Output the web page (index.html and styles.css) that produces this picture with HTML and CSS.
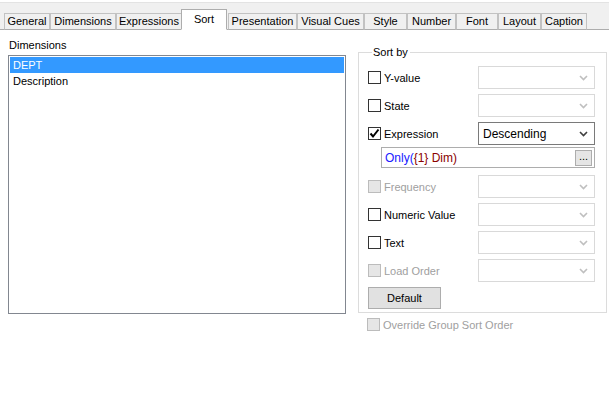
FILE: index.html
```html
<!DOCTYPE html>
<html lang="en">
<head>
  <meta charset="UTF-8" />
  <title>Sort</title>
  <link rel="stylesheet" href="styles.css">
</head>
<body>

  <!-- tab strip -->
  <div class="tabs">
    <div class="tab">General</div>
    <div class="tab">Dimensions</div>
    <div class="tab">Expressions</div>
    <div class="tab active">Sort</div>
    <div class="tab">Presentation</div>
    <div class="tab">Visual Cues</div>
    <div class="tab">Style</div>
    <div class="tab">Number</div>
    <div class="tab">Font</div>
    <div class="tab">Layout</div>
    <div class="tab">Caption</div>
  </div>

  <div class="page">
    <div class="left">
      <div class="label">Dimensions</div>
      <div class="listbox">
        <div class="item selected">DEPT</div>
        <div class="item">Description</div>
      </div>
    </div>

    <div class="right">
      <fieldset class="group">
        <legend>Sort by</legend>

        <div class="row">
          <label class="check"><span class="box"></span>Y-value</label>
          <div class="combo disabled"><span></span><svg width="9" height="6" viewBox="0 0 9 6"><polyline points="1,1 4.5,4.5 8,1" /></svg></div>
        </div>
        <div class="row">
          <label class="check"><span class="box"></span>State</label>
          <div class="combo disabled"><span></span><svg width="9" height="6" viewBox="0 0 9 6"><polyline points="1,1 4.5,4.5 8,1" /></svg></div>
        </div>
        <div class="row short">
          <label class="check"><span class="box checked"><svg width="11" height="11" viewBox="0 0 11 11"><polyline points="1.5,5.5 4,8.5 9.5,1.5" /></svg></span>Expression</label>
          <div class="combo"><span>Descending</span><svg width="9" height="6" viewBox="0 0 9 6"><polyline points="1,1 4.5,4.5 8,1" /></svg></div>
        </div>
        <div class="expr">
          <span class="fn">Only(</span><span class="dim">{1} Dim)</span>
          <div class="dots">...</div>
        </div>
        <div class="row">
          <label class="check off"><span class="box"></span>Frequency</label>
          <div class="combo disabled"><span></span><svg width="9" height="6" viewBox="0 0 9 6"><polyline points="1,1 4.5,4.5 8,1" /></svg></div>
        </div>
        <div class="row">
          <label class="check"><span class="box"></span>Numeric Value</label>
          <div class="combo disabled"><span></span><svg width="9" height="6" viewBox="0 0 9 6"><polyline points="1,1 4.5,4.5 8,1" /></svg></div>
        </div>
        <div class="row">
          <label class="check"><span class="box"></span>Text</label>
          <div class="combo disabled"><span></span><svg width="9" height="6" viewBox="0 0 9 6"><polyline points="1,1 4.5,4.5 8,1" /></svg></div>
        </div>
        <div class="row">
          <label class="check off"><span class="box"></span>Load Order</label>
          <div class="combo disabled"><span></span><svg width="9" height="6" viewBox="0 0 9 6"><polyline points="1,1 4.5,4.5 8,1" /></svg></div>
        </div>

        <button class="btn">Default</button>
      </fieldset>

      <label class="check off override"><span class="box"></span>Override Group Sort Order</label>
    </div>
  </div>

</body>
</html>
```

FILE: styles.css
```css
* {
  margin: 0;
  padding: 0;
  box-sizing: border-box;
}

html, body {
  height: 100%;
  overflow: hidden;
}

body {
  background: #fff;
  color: #000;
  font-family: "Liberation Sans", Arial, sans-serif;
  font-size: 11px;
}

/* tab strip */
.tabs {
  display: flex;
  align-items: flex-end;
  height: 30px;
  padding-left: 4px;
  background: #f0f0f0;
  border-top: 2px solid #fff;
  border-bottom: 1px solid #adadad;
  box-shadow: inset 0 1px 0 #e3e3e3;
}

.tab {
  height: 17px;
  line-height: 15px;
  margin-bottom: -1px;
  text-align: center;
  background: #f0f0f0;
  border: 1px solid #c2c2c2;
  border-bottom-color: #adadad;
  white-space: nowrap;
}

.tab:nth-child(1) { width: 46px; }
.tab:nth-child(2) { width: 66px; }
.tab:nth-child(3) { width: 66px; }
.tab:nth-child(4) { width: 46px; }
.tab:nth-child(5) { width: 69px; margin-left: 1px; }
.tab:nth-child(6) { width: 67px; }
.tab:nth-child(7) { width: 43px; }
.tab:nth-child(8) { width: 49px; }
.tab:nth-child(9) { width: 42px; }
.tab:nth-child(10) { width: 43px; }
.tab:nth-child(11) { width: 46px; }

.tab.active {
  height: 21px;
  line-height: 18px;
  margin-left: -1px;
  background: #fff;
  border-color: #adadad;
  border-bottom-color: #fff;
}

/* content */
.page {
  display: flex;
  padding: 9px 0 0 8px;
}

.left {
  width: 338px;
}

.label {
  height: 16px;
  padding-left: 1px;
  line-height: 13px;
}

.listbox {
  height: 259px;
  padding: 1px;
  border: 1px solid #828790;
}

.item {
  height: 16px;
  line-height: 16px;
  padding-left: 3px;
}

.item.selected {
  background: #3399ff;
  color: #fff;
}

.right {
  margin-left: 12px;
  margin-top: 6px;
}

.group {
  width: 249px;
  height: 268px;
  padding: 7px 11px 0 9px;
  border: 1px solid #dcdcdc;
}

.group legend {
  margin-left: 4px;
  padding: 0 2px 0 1px;
  line-height: 14px;
}

.row {
  display: flex;
  align-items: center;
  justify-content: space-between;
  height: 23px;
  margin-bottom: 5px;
}

.row.short {
  margin-bottom: 2px;
}

.check {
  display: flex;
  align-items: center;
  gap: 3px;
}

.check.off {
  color: #a0a0a0;
}

.box {
  display: flex;
  align-items: center;
  justify-content: center;
  width: 13px;
  height: 13px;
  border: 1px solid #333;
  background: #fff;
}

.check.off .box {
  border-color: #bcbcbc;
  background: #e6e6e6;
}

.box svg polyline {
  fill: none;
  stroke: #000;
  stroke-width: 2;
}

.combo {
  display: flex;
  align-items: center;
  justify-content: space-between;
  width: 117px;
  height: 23px;
  padding: 0 6px 0 4px;
  border: 1px solid #7a7a7a;
  background: #fff;
}

.combo span {
  font-size: 12px;
}

.combo.disabled {
  border-color: #d9d9d9;
}

.combo svg polyline {
  fill: none;
  stroke: #404040;
  stroke-width: 1.6;
}

.combo.disabled svg polyline {
  stroke: #bfbfbf;
}

.expr {
  position: relative;
  display: flex;
  align-items: center;
  height: 21px;
  margin: 0 0 7px 13px;
  padding-left: 3px;
  font-size: 12px;
  border: 1px solid #adadad;
}

.fn {
  color: #2020ff;
}

.dim {
  color: #8b0000;
}

.dots {
  position: absolute;
  right: 2px;
  top: 2px;
  width: 17px;
  height: 16px;
  line-height: 10px;
  text-align: center;
  font-size: 11px;
  background: #e5e5e5;
  border: 1px solid #adadad;
}

.btn {
  width: 73px;
  height: 22px;
  font-family: inherit;
  font-size: 11px;
  color: #000;
  background: #e1e1e1;
  border: 1px solid #adadad;
}

.override {
  margin: 5px 0 0 9px;
}
```
